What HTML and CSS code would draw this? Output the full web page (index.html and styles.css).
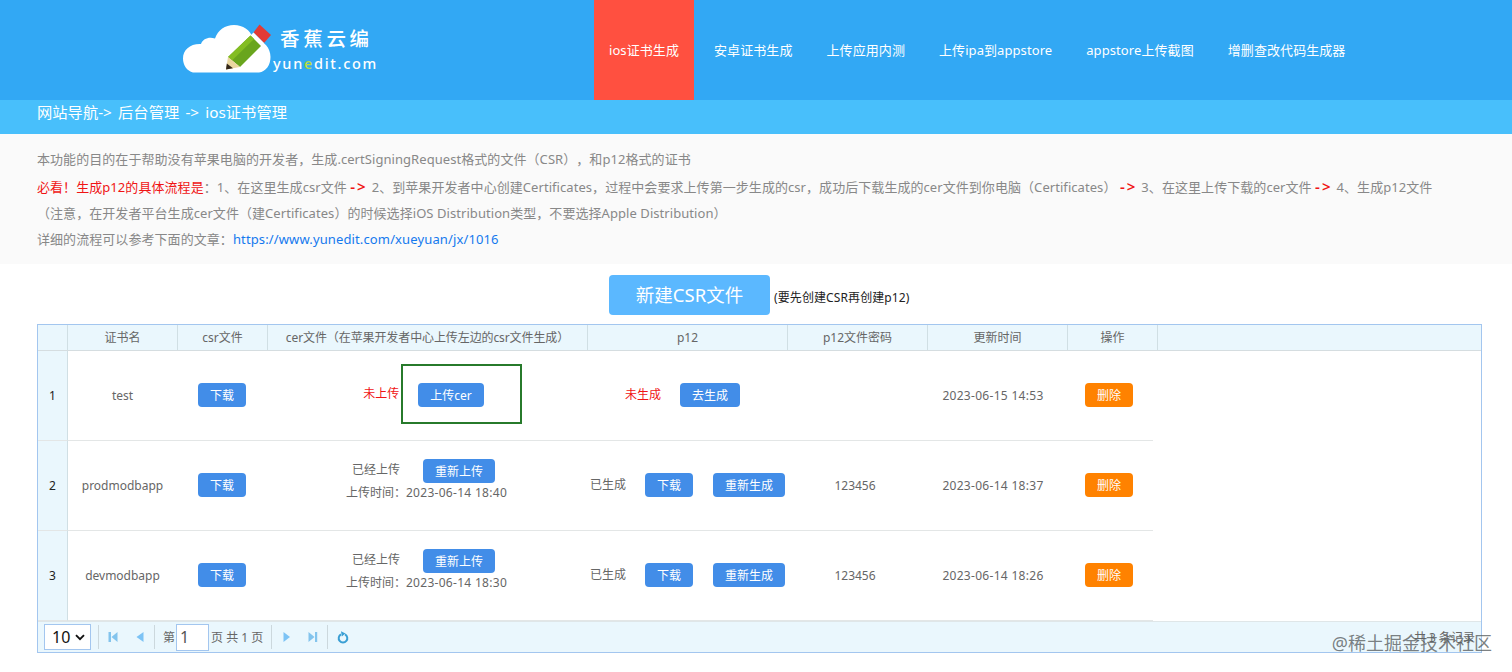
FILE: index.html
```html
<!DOCTYPE html>
<html lang="zh-CN">
<head>
  <meta charset="UTF-8">
  <meta name="viewport" content="width=device-width, initial-scale=1.0">
  <title>ios证书管理</title>
  <link rel="stylesheet" href="styles.css">
</head>
<body>

<header class="header">
  <a class="logo" href="#">
    <svg class="logo-cloud" width="90" height="52" viewBox="0 0 90 52">
      <path d="M10 48.500 C4 47 0 41 0 34.500 C0 26 7 19.500 18 20 C20 14.500 26 12.500 32 14.500 C35 6 42 1 51 1 C60 1 67 6 70 14 C81 16 87.500 24 87.500 33 C87.500 41 83 47.500 76 48.500 Z" fill="#fff"/>
      <path d="M70.500 8.500 L76.500 0.500 L88 11 L81 19 Z" fill="#e23b35"/>
      <path d="M67.500 11.500 L70.500 8.500 L81 19 L78 22 Z" fill="#fff"/>
      <path d="M45 33 L67.500 11.500 L78 22 L57 43 Z" fill="#69a51d"/>
      <path d="M45 33 L67.500 11.500 L71 15 L49 36.500 Z" fill="#83bd22"/>
      <path d="M45 33 L57 43 L43 45.500 Z" fill="#ead7a0"/>
      <path d="M43.800 39.500 L50 44.300 L43 45.500 Z" fill="#33261a"/>
    </svg>
    <span class="logo-text">
      <span class="logo-name">香蕉云编</span>
      <span class="logo-domain">yun<i>e</i>dit.com</span>
    </span>
  </a>
  <nav class="nav">
    <a class="nav-item active" href="#">ios证书生成</a>
    <a class="nav-item" href="#">安卓证书生成</a>
    <a class="nav-item" href="#">上传应用内测</a>
    <a class="nav-item" href="#">上传ipa到appstore</a>
    <a class="nav-item" href="#">appstore上传截图</a>
    <a class="nav-item" href="#">增删查改代码生成器</a>
  </nav>
</header>

<div class="breadcrumb">网站导航-&gt; 后台管理 -&gt; ios证书管理</div>

<div class="intro">
  <p class="intro-purpose">本功能的目的在于帮助没有苹果电脑的开发者，生成.certSigningRequest格式的文件（CSR），和p12格式的证书</p>
  <p class="intro-steps"><span class="red">必看！生成p12的具体流程是</span>：1、在这里生成csr文件 <b class="red">-&gt;</b> 2、到苹果开发者中心创建Certificates，过程中会要求上传第一步生成的csr，成功后下载生成的cer文件到你电脑（Certificates） <b class="red">-&gt;</b> 3、在这里上传下载的cer文件 <b class="red">-&gt;</b> 4、生成p12文件</p>
  <p class="intro-note">（注意，在开发者平台生成cer文件（建Certificates）的时候选择iOS Distribution类型，不要选择Apple Distribution）</p>
  <p class="intro-link">详细的流程可以参考下面的文章：<a href="#">https://www.yunedit.com/xueyuan/jx/1016</a></p>
</div>

<div class="toolbar">
  <button class="btn-new">新建CSR文件</button>
  <span class="tip">(要先创建CSR再创建p12)</span>
</div>

<div class="datagrid">
  <div class="grid-head">
    <div></div>
    <div>证书名</div>
    <div>csr文件</div>
    <div class="head-cer">cer文件（在苹果开发者中心上传左边的csr文件生成）</div>
    <div>p12</div>
    <div>p12文件密码</div>
    <div>更新时间</div>
    <div>操作</div>
  </div>

  <div class="grid-row">
    <div class="num">1</div>
    <div class="name">test</div>
    <div class="act"><button class="btn">下载</button></div>
    <div class="cer">
      <div class="line"><span class="state red">未上传</span><button class="btn">上传cer</button></div>
      <div class="mark"></div>
    </div>
    <div class="p12 none"><span class="state red">未生成</span><button class="btn">去生成</button></div>
    <div class="pwd"></div>
    <div class="time">2023-06-15 14:53</div>
    <div class="act"><button class="btn btn-del">删除</button></div>
  </div>

  <div class="grid-row">
    <div class="num">2</div>
    <div class="name">prodmodbapp</div>
    <div class="act"><button class="btn">下载</button></div>
    <div class="cer">
      <div class="line done"><span class="state">已经上传</span><button class="btn">重新上传</button></div>
      <div class="uploaded">上传时间：<span class="time">2023-06-14 18:40</span></div>
    </div>
    <div class="p12"><span class="state">已生成</span><button class="btn">下载</button><button class="btn">重新生成</button></div>
    <div class="pwd">123456</div>
    <div class="time">2023-06-14 18:37</div>
    <div class="act"><button class="btn btn-del">删除</button></div>
  </div>

  <div class="grid-row">
    <div class="num">3</div>
    <div class="name">devmodbapp</div>
    <div class="act"><button class="btn">下载</button></div>
    <div class="cer">
      <div class="line done"><span class="state">已经上传</span><button class="btn">重新上传</button></div>
      <div class="uploaded">上传时间：<span class="time">2023-06-14 18:30</span></div>
    </div>
    <div class="p12"><span class="state">已生成</span><button class="btn">下载</button><button class="btn">重新生成</button></div>
    <div class="pwd">123456</div>
    <div class="time">2023-06-14 18:26</div>
    <div class="act"><button class="btn btn-del">删除</button></div>
  </div>

  <div class="pager">
    <div class="page-size">10
      <svg width="10" height="7" viewBox="0 0 10 7"><path d="M1 1.200 L5 5.200 L9 1.200" fill="none" stroke="#111" stroke-width="1.900"/></svg>
    </div>
    <div class="pages icons">
      <a class="page-icon" href="#"><svg width="10" height="10" viewBox="0 0 10 10"><path d="M0.500 0 H3 V10 H0.500 Z M9.500 0 V10 L3.500 5 Z" fill="#83c4ed"/></svg></a>
      <a class="page-icon" href="#"><svg width="8" height="10" viewBox="0 0 8 10"><path d="M7.500 0 V10 L0.500 5 Z" fill="#7cc3f5"/></svg></a>
    </div>
    <div class="pages">
      <span>第</span>
      <input class="page-num" type="text" value="1">
      <span>页 共 1 页</span>
    </div>
    <div class="pages icons">
      <a class="page-icon" href="#"><svg width="8" height="10" viewBox="0 0 8 10"><path d="M0.500 0 V10 L7 5 Z" fill="#7cc3f5"/></svg></a>
      <a class="page-icon" href="#"><svg width="10" height="10" viewBox="0 0 10 10"><path d="M0.500 0 V10 L6.500 5 Z M7 0 H9.200 V10 H7 Z" fill="#83c4ed"/></svg></a>
    </div>
    <div class="pages icons">
      <a class="page-icon reload" href="#"><svg width="12" height="13" viewBox="0 0 12 13"><path d="M8 3.400 A4.300 4.300 0 1 1 4 3.400" fill="none" stroke="#3a9fd4" stroke-width="2"/><path d="M4 0.300 L8.500 2.600 L4.800 5.500 Z" fill="#3a9fd4"/></svg></a>
    </div>
    <span class="total">共 3 条记录</span>
  </div>
</div>

<div class="watermark">@稀土掘金技术社区</div>

</body>
</html>
```

FILE: styles.css
```css
* {
  box-sizing: border-box;
}
body {
  margin: 0;
  height: 672px;
  overflow: hidden;
  position: relative;
  background: #fff;
  font-family: "Noto Sans", "Noto Sans CJK SC", sans-serif;
  font-size: 12px;
  color: #666;
  text-spacing-trim: space-all;
}
a {
  text-decoration: none;
}
p {
  margin: 0;
}
button {
  font-family: inherit;
  border: none;
  padding: 0;
}
.red {
  color: #f01414;
}

/* 顶部导航 */
.header {
  height: 100px;
  background: #32a8f4;
  display: flex;
}
.logo {
  width: 594px;
  padding: 24px 0 0 183px;
  display: flex;
  color: #fff;
}
.logo-text {
  display: flex;
  flex-direction: column;
  white-space: nowrap;
}
.logo-name {
  margin: 1px 0 0 7px;
  font-size: 19.500px;
  font-weight: 500;
  line-height: 28px;
  letter-spacing: 3.700px;
}
.logo-domain {
  font-size: 14.500px;
  font-weight: 500;
  line-height: 20px;
  letter-spacing: 1.700px;
}
.logo-domain i {
  font-style: normal;
  color: #b9dc3c;
}
.nav {
  display: flex;
}
.nav-item {
  padding: 0 17px;
  color: #fff;
  font-size: 13px;
  line-height: 101px;
  letter-spacing: 0.080px;
  white-space: nowrap;
}
.nav-item.active {
  width: 100px;
  margin-right: 3px;
  padding: 0;
  text-align: center;
  background: #ff5040;
}
.breadcrumb {
  height: 34px;
  padding-left: 37px;
  background: #48bffb;
  color: #fff;
  font-size: 15.300px;
  line-height: 25px;
  word-spacing: 2.200px;
}

/* 说明文字 */
.intro {
  height: 130px;
  padding: 12px 0 0 37px;
  background: #fafafa;
  color: #888;
  font-size: 13px;
  line-height: 26px;
  letter-spacing: 0.060px;
  white-space: nowrap;
}
.intro-purpose {
  height: 28px;
}
.intro b {
  display: inline-block;
  width: 17px;
  margin: 0 1px 0 0;
  font-size: 15px;
  font-weight: 600;
  line-height: 20px;
  letter-spacing: 2px;
}
.intro a {
  color: #1479ee;
  letter-spacing: 0.130px;
}

.toolbar {
  height: 60px;
  padding: 11px 0 0 609px;
  display: flex;
}
.btn-new {
  width: 161px;
  height: 40px;
  padding-bottom: 2px;
  border-radius: 4px;
  background: #5bb8ff;
  color: #fff;
  font-size: 18.500px;
}
.tip {
  margin-left: 4px;
  color: #222;
  line-height: 46px;
  letter-spacing: 0.100px;
}

/* 表格 */
.datagrid {
  width: 1445px;
  height: 329px;
  margin-left: 37px;
  border: 1px solid #a3c6ef;
}
.grid-head {
  height: 26px;
  display: grid;
  grid-template-columns: 30px 110px 90px 320px 200px 140px 140px 90px;
  background: #eaf7fd;
  border-bottom: 1px solid #d5dde0;
  line-height: 25px;
  text-align: center;
}
.grid-head div {
  border-right: 1px solid #d0dfe4;
  white-space: nowrap;
}
.grid-head .head-cer {
  letter-spacing: -0.100px;
}
.grid-row {
  width: 1115px;
  height: 90px;
  display: grid;
  grid-template-columns: 30px 109px 90px 319px 203px 132px 144px 88px;
}
.grid-row > div {
  display: flex;
  align-items: center;
  justify-content: center;
  border-bottom: 1px solid #e3e6e6;
  white-space: nowrap;
}
.grid-row > .num {
  background: #eaf7fd;
  border-right: 1px solid #d0dfe4;
  color: #222;
}
.grid-row > .act,
.grid-row > .p12 {
  padding-bottom: 2px;
}
.btn {
  height: 24px;
  padding: 1px 12px 0;
  border-radius: 4px;
  background: #428de8;
  color: #fff;
  font-size: 12px;
  line-height: 23px;
}
.btn-del {
  background: #ff8200;
}
.grid-row > .cer {
  position: relative;
  flex-direction: column;
}
.line {
  display: flex;
  gap: 19px;
  padding: 0 6px 2px 0;
}
.line.done {
  gap: 23px;
  padding-bottom: 0;
}
.state {
  line-height: 22px;
}
.uploaded {
  line-height: 20px;
  margin-bottom: 10px;
}
/* 绿色标注框 */
.mark {
  position: absolute;
  left: 134px;
  top: 13px;
  width: 121px;
  height: 60px;
  border: 2px solid #277a2b;
}
.p12 {
  gap: 20px;
}
.p12 .state {
  margin-right: -1px;
}
.grid-row > .p12.none {
  padding-right: 10px;
}
.time {
  letter-spacing: 0.300px;
}

/* 分页 */
.pager {
  height: 31px;
  padding: 0 6px;
  display: flex;
  align-items: center;
  background: #eaf7fd;
  border-top: 1px solid #dfe6e8;
}
.page-size {
  width: 47px;
  height: 26px;
  margin-right: 7px;
  padding: 0 5px 0 7px;
  display: flex;
  align-items: center;
  justify-content: space-between;
  border: 1px solid #a3c6ef;
  background: #fff;
  color: #111;
  font-size: 16px;
}
.pages {
  height: 24px;
  padding: 0 8px;
  display: flex;
  align-items: center;
  border-left: 1px solid #ccd8dd;
}
.pages.icons {
  padding: 0 1px;
}
.page-icon {
  width: 26.500px;
  display: flex;
  justify-content: center;
}
.page-icon.reload {
  width: 28px;
}
.page-num {
  width: 33px;
  height: 27px;
  margin: 0 2px 0 1px;
  padding: 0 3px;
  border: 1px solid #a3c6ef;
  font-family: inherit;
  font-size: 16px;
  color: #555;
}
.total {
  margin-left: auto;
}
.watermark {
  position: absolute;
  right: 20px;
  bottom: 16px;
  color: rgba(90, 95, 98, 0.800);
  font-size: 18px;
  line-height: 26px;
}
```
